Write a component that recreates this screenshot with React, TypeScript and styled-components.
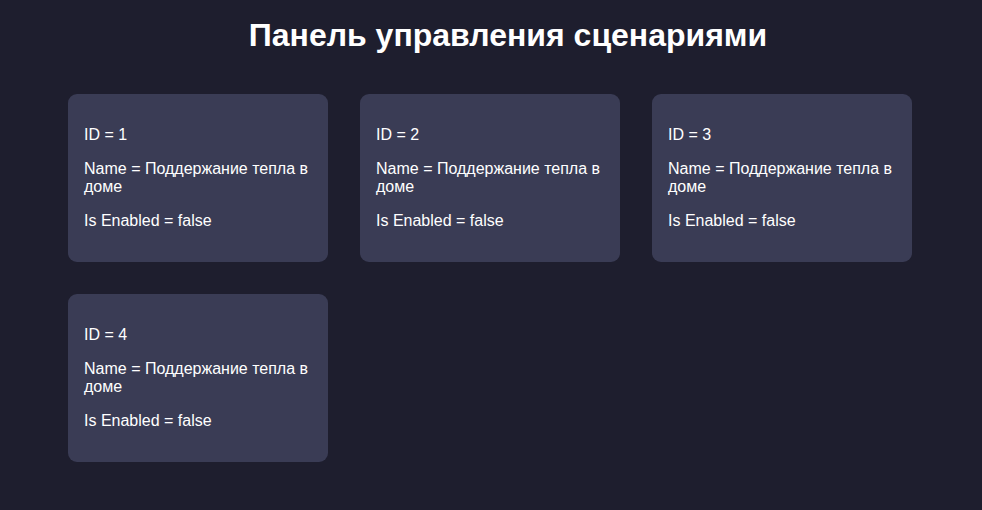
import React from "react";
import styled, { createGlobalStyle } from "styled-components";

const GlobalStyle = createGlobalStyle`
  html, body {
    margin: 0;
    padding: 0;
    background: #1e1e2e;
    color: #ffffff;
    font-family: "Liberation Sans", Arial, sans-serif;
  }
`;

const Page = styled.div`
  min-height: 510px;
  padding: 17px 68px 32px;
  box-sizing: border-box;
`;

const Title = styled.h1`
  margin: 0 0 40px;
  padding-left: 34px;
  font-size: 32px;
  font-weight: bold;
  text-align: center;
  color: #ffffff;
`;

const Grid = styled.div`
  display: grid;
  grid-template-columns: repeat(3, 260px);
  gap: 32px;
`;

const Card = styled.div`
  background: #3a3c55;
  border-radius: 9px;
  padding: 16px;
  height: 168px;
  box-sizing: border-box;
  font-size: 16px;
`;

const Field = styled.p`
  margin: 16px 0;
  line-height: 18px;
`;

const scenarios = [1, 2, 3, 4].map((id) => ({
  id,
  name: "Поддержание тепла в доме",
  isEnabled: false,
}));

export default function App() {
  return (
    <>
      <GlobalStyle />
      <Page>
        <Title>Панель управления сценариями</Title>
        <Grid>
          {scenarios.map((s) => (
            <Card key={s.id}>
              <Field>ID = {s.id}</Field>
              <Field>Name = {s.name}</Field>
              <Field>Is Enabled = {String(s.isEnabled)}</Field>
            </Card>
          ))}
        </Grid>
      </Page>
    </>
  );
}
